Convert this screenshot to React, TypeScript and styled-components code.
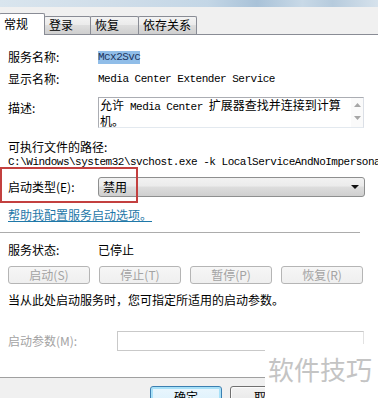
import React from 'react'
import styled, { createGlobalStyle } from 'styled-components'

const cjk = `"Noto Sans CJK SC", "Liberation Sans", sans-serif`
const mono = `"Liberation Mono", "Noto Sans CJK SC", monospace`

const GlobalStyle = createGlobalStyle`
  html, body {
    margin: 0;
    padding: 0;
    background: #fff;
  }
  body {
    width: 378px;
    height: 398px;
    overflow: hidden;
    font-family: ${cjk};
    font-size: 12px;
    color: #000;
  }
`

const Window = styled.div`
  position: relative;
  width: 378px;
  height: 398px;
  overflow: hidden;
  background: #f0f0f0;
  display: flex;
  flex-direction: column;
`

const TitleStrip = styled.div`
  flex: 0 0 7px;
  background: linear-gradient(
    to right,
    #d9e5ee 0%,
    #cfdde9 30%,
    #c3d6e6 55%,
    #a9c2d8 68%,
    #c8d9e7 80%,
    #b6cbdd 88%,
    #d6e2ec 100%
  );
`

const TabBar = styled.div`
  flex: 0 0 28px;
  box-sizing: border-box;
  display: flex;
  align-items: flex-end;
  border-bottom: 1px solid #898c95;
`

const Tab = styled.div<{ $w: number; $active?: boolean }>`
  position: relative;
  box-sizing: border-box;
  width: ${(p) => p.$w}px;
  height: ${(p) => (p.$active ? 22 : 18)}px;
  margin-bottom: ${(p) => (p.$active ? -1 : 0)}px;
  margin-left: -1px;
  padding-left: 4px;
  border: 1px solid #898c95;
  border-bottom: none;
  border-radius: 2px 2px 0 0;
  background: ${(p) =>
    p.$active ? '#fff' : 'linear-gradient(#f3f3f3, #ebebeb 45%, #dddddd 50%, #cfcfcf)'};
  z-index: ${(p) => (p.$active ? 2 : 1)};
  line-height: ${(p) => (p.$active ? 20 : 16)}px;
  font-size: 12px;
  white-space: nowrap;
`

const Panel = styled.div`
  position: relative;
  flex: 0 0 343px;
  box-sizing: border-box;
  background: #fff;
  border-bottom: 1px solid #a0a0a0;
  padding: 15px 0 0 8px;
  display: flex;
  flex-direction: column;
`

const Row = styled.div<{ $mt: number; $top?: boolean }>`
  position: relative;
  display: flex;
  align-items: ${(p) => (p.$top ? 'flex-start' : 'center')};
  margin-top: ${(p) => p.$mt}px;
`

const Label = styled.div<{ $w?: number; $dim?: boolean; $pt?: number }>`
  flex: 0 0 ${(p) => p.$w ?? 90}px;
  line-height: 14px;
  padding-top: ${(p) => p.$pt ?? 0}px;
  color: ${(p) => (p.$dim ? '#a3a3a3' : '#000')};
  white-space: nowrap;
`

const Text = styled.div`
  line-height: 14px;
  white-space: nowrap;
`

const Lat = styled.span`
  font-family: ${mono};
  font-size: 11px;
  letter-spacing: -0.55px;
  white-space: pre;
`

const Selected = styled.span`
  font-family: ${mono};
  font-size: 11px;
  letter-spacing: -0.55px;
  line-height: 13px;
  display: inline-block;
  width: 42px;
  background: #90bde8;
  color: #1d3560;
`

const TextBox = styled.div`
  box-sizing: border-box;
  width: 266px;
  height: 31px;
  display: flex;
  border: 1px solid #abadb3;
  border-right-color: #dbdfe6;
  border-bottom-color: #e3e9ef;
`

const BoxText = styled.div`
  flex: 1;
  padding-left: 1px;
`

const BoxLine = styled.div`
  line-height: 14px;
  white-space: nowrap;
`

const ScrollBar = styled.div`
  flex: 0 0 12px;
  display: flex;
  flex-direction: column;
  align-items: center;
  justify-content: space-between;
  padding: 5px 0 7px;
  box-sizing: border-box;
  background: #fafafa;
`

const Path = styled.div`
  font-family: ${mono};
  font-size: 11px;
  letter-spacing: -0.5px;
  line-height: 14px;
  white-space: pre;
`

const Select = styled.div`
  box-sizing: border-box;
  width: 267px;
  height: 20px;
  display: flex;
  align-items: center;
  padding: 0 4px;
  border: 1px solid #8e8f8f;
  border-radius: 3px;
  background: linear-gradient(#f2f2f2, #ebebeb 45%, #dddddd 50%, #cfcfcf);
  line-height: 14px;
`

const Arrow = styled.span`
  margin-left: auto;
  width: 0;
  height: 0;
  border-left: 4px solid transparent;
  border-right: 4px solid transparent;
  border-top: 4px solid #111;
  margin-right: 1px;
`

const Mark = styled.span`
  position: absolute;
  left: -8px;
  top: -10px;
  width: 138px;
  height: 36px;
  box-sizing: border-box;
  border: 2px solid #c3403f;
  pointer-events: none;
  z-index: 3;
`

const Link = styled.div`
  line-height: 14px;
  color: #1f78a8;
  text-decoration: underline;
  text-underline-offset: 1px;
`

const Separator = styled.div<{ $mt: number }>`
  margin: ${(p) => p.$mt}px 0 0 -8px;
  width: 360px;
  height: 1px;
  background: #acacac;
`

const ButtonRow = styled.div<{ $mt: number }>`
  display: flex;
  gap: 9px;
  margin-top: ${(p) => p.$mt}px;
`

const StateButton = styled.div`
  box-sizing: border-box;
  width: 82px;
  height: 18px;
  border: 1px solid #b5b5b5;
  border-radius: 3px;
  background: linear-gradient(#f6f6f6, #efefef);
  color: #a3a3a3;
  text-align: center;
  line-height: 16px;
`

const Input = styled.div`
  box-sizing: border-box;
  width: 247px;
  height: 20px;
  border: 1px solid #c9c9c9;
  border-right-color: #e2e2e2;
  background: #fff;
`

const Footer = styled.div`
  flex: 1;
  display: flex;
  gap: 8px;
  padding: 8px 0 0 150px;
`

const DialogButton = styled.div<{ $primary?: boolean }>`
  box-sizing: border-box;
  width: 72px;
  height: 23px;
  border: 1px solid ${(p) => (p.$primary ? '#3c7fb1' : '#707070')};
  border-radius: 3px;
  box-shadow: ${(p) => (p.$primary ? 'inset 0 0 0 2px #a8e1f8' : 'inset 0 0 0 1px #fbfbfb')};
  background: ${(p) =>
    p.$primary ? 'linear-gradient(#eaf6fd, #d9f0fc)' : 'linear-gradient(#f2f2f2, #e4e4e4)'};
  text-align: center;
  line-height: 20px;
`

const Watermark = styled.div`
  position: absolute;
  right: 0;
  top: 344px;
  width: 113px;
  height: 54px;
  box-sizing: border-box;
  padding: 10px 0 0 3px;
  background: #fff;
  color: #c4c4c4;
  font-size: 26px;
  line-height: 30px;
  white-space: nowrap;
  z-index: 5;
`

const Tri = ({ up }: { up?: boolean }) => (
  <svg width="7" height="4" viewBox="0 0 7 4">
    <path d={up ? 'M0 4 L3.5 0 L7 4 Z' : 'M0 0 L3.5 4 L7 0 Z'} fill="#a6a6a6" />
  </svg>
)

const tabs = [
  { label: '常规', w: 46, active: true },
  { label: '登录', w: 47 },
  { label: '恢复', w: 49 },
  { label: '依存关系', w: 59 },
]

const buttons = ['启动(S)', '停止(T)', '暂停(P)', '恢复(R)']

const App = () => {
  return (
    <Window>
      <GlobalStyle />
      <TitleStrip />
      <TabBar>
        {tabs.map((t) => (
          <Tab key={t.label} $w={t.w} $active={t.active}>
            {t.label}
          </Tab>
        ))}
      </TabBar>
      <Panel>
        <Row $mt={0}>
          <Label>服务名称:</Label>
          <Selected>Mcx2Svc</Selected>
        </Row>
        <Row $mt={8}>
          <Label>显示名称:</Label>
          <Path>Media Center Extender Service</Path>
        </Row>
        <Row $mt={11} $top>
          <Label $pt={4}>描述:</Label>
          <TextBox>
            <BoxText>
              <BoxLine>
                允许<Lat> Media Center </Lat>扩展器查找并连接到计算
              </BoxLine>
              <BoxLine>机。</BoxLine>
            </BoxText>
            <ScrollBar>
              <Tri up />
              <Tri />
            </ScrollBar>
          </TextBox>
        </Row>
        <Row $mt={12}>
          <Text>可执行文件的路径:</Text>
        </Row>
        <Row $mt={1}>
          <Path>C:\Windows\system32\svchost.exe -k LocalServiceAndNoImpersonation</Path>
        </Row>
        <Row $mt={8}>
          <Mark />
          <Label>启动类型(E):</Label>
          <Select>
            禁用
            <Arrow />
          </Select>
        </Row>
        <Row $mt={11}>
          <Link>帮助我配置服务启动选项。</Link>
        </Row>
        <Separator $mt={10} />
        <Row $mt={10}>
          <Label>服务状态:</Label>
          <Text>已停止</Text>
        </Row>
        <ButtonRow $mt={9}>
          {buttons.map((b) => (
            <StateButton key={b}>{b}</StateButton>
          ))}
        </ButtonRow>
        <Row $mt={9}>
          <Text>当从此处启动服务时，您可指定所适用的启动参数。</Text>
        </Row>
        <Row $mt={24}>
          <Label $w={109} $dim>
            启动参数(M):
          </Label>
          <Input />
        </Row>
      </Panel>
      <Footer>
        <DialogButton $primary>确定</DialogButton>
        <DialogButton>取消</DialogButton>
      </Footer>
      <Watermark>软件技巧</Watermark>
    </Window>
  )
}

export default App
